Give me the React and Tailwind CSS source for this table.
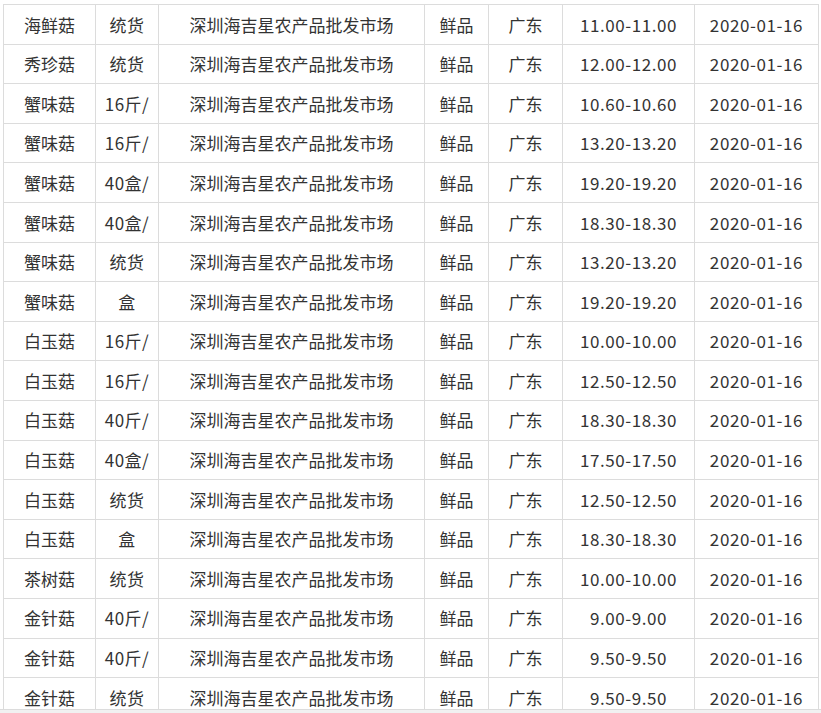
// 价格行情表 — 深圳海吉星农产品批发市场

const ROWS = [
  ["海鲜菇", "统货", "11.00-11.00"],
  ["秀珍菇", "统货", "12.00-12.00"],
  ["蟹味菇", "16斤/", "10.60-10.60"],
  ["蟹味菇", "16斤/", "13.20-13.20"],
  ["蟹味菇", "40盒/", "19.20-19.20"],
  ["蟹味菇", "40盒/", "18.30-18.30"],
  ["蟹味菇", "统货", "13.20-13.20"],
  ["蟹味菇", "盒", "19.20-19.20"],
  ["白玉菇", "16斤/", "10.00-10.00"],
  ["白玉菇", "16斤/", "12.50-12.50"],
  ["白玉菇", "40斤/", "18.30-18.30"],
  ["白玉菇", "40盒/", "17.50-17.50"],
  ["白玉菇", "统货", "12.50-12.50"],
  ["白玉菇", "盒", "18.30-18.30"],
  ["茶树菇", "统货", "10.00-10.00"],
  ["金针菇", "40斤/", "9.00-9.00"],
  ["金针菇", "40斤/", "9.50-9.50"],
  ["金针菇", "统货", "9.50-9.50"],
];

const TD = "border border-[#dcdcdc] p-0 h-[39.6px] text-center align-middle whitespace-nowrap";

export default function App() {
  return (
    <div
      className="w-[821px] h-[713px] flex flex-col overflow-hidden bg-white text-[#333] text-[17px]"
      style={{ fontFamily: '"Noto Sans CJK SC", "Noto Sans", sans-serif' }}
    >
      <div className="h-[709px] overflow-hidden">
        <table className="ml-[3px] mt-[4px] border-collapse table-fixed w-[815px]">
          <colgroup>
            <col className="w-[92px]" />
            <col className="w-[63px]" />
            <col className="w-[266px]" />
            <col className="w-[64px]" />
            <col className="w-[74px]" />
            <col className="w-[132px]" />
            <col className="w-[124px]" />
          </colgroup>
          <tbody>
            {ROWS.map((r, i) => (
              <tr key={i}>
                <td className={TD}>{r[0]}</td>
                <td className={`${TD} tracking-[0.5px]`}>{r[1]}</td>
                <td className={TD}>深圳海吉星农产品批发市场</td>
                <td className={TD}>鲜品</td>
                <td className={TD}>广东</td>
                <td className={`${TD} tracking-[0.55px]`}>{r[2]}</td>
                <td className={`${TD} tracking-[0.6px]`}>2020-01-16</td>
              </tr>
            ))}
          </tbody>
        </table>
      </div>
      {/* 底部滚动条 */}
      <div className="flex-1 border-t border-[#dcdcdc] bg-[#f1f1f1]" />
    </div>
  );
}
